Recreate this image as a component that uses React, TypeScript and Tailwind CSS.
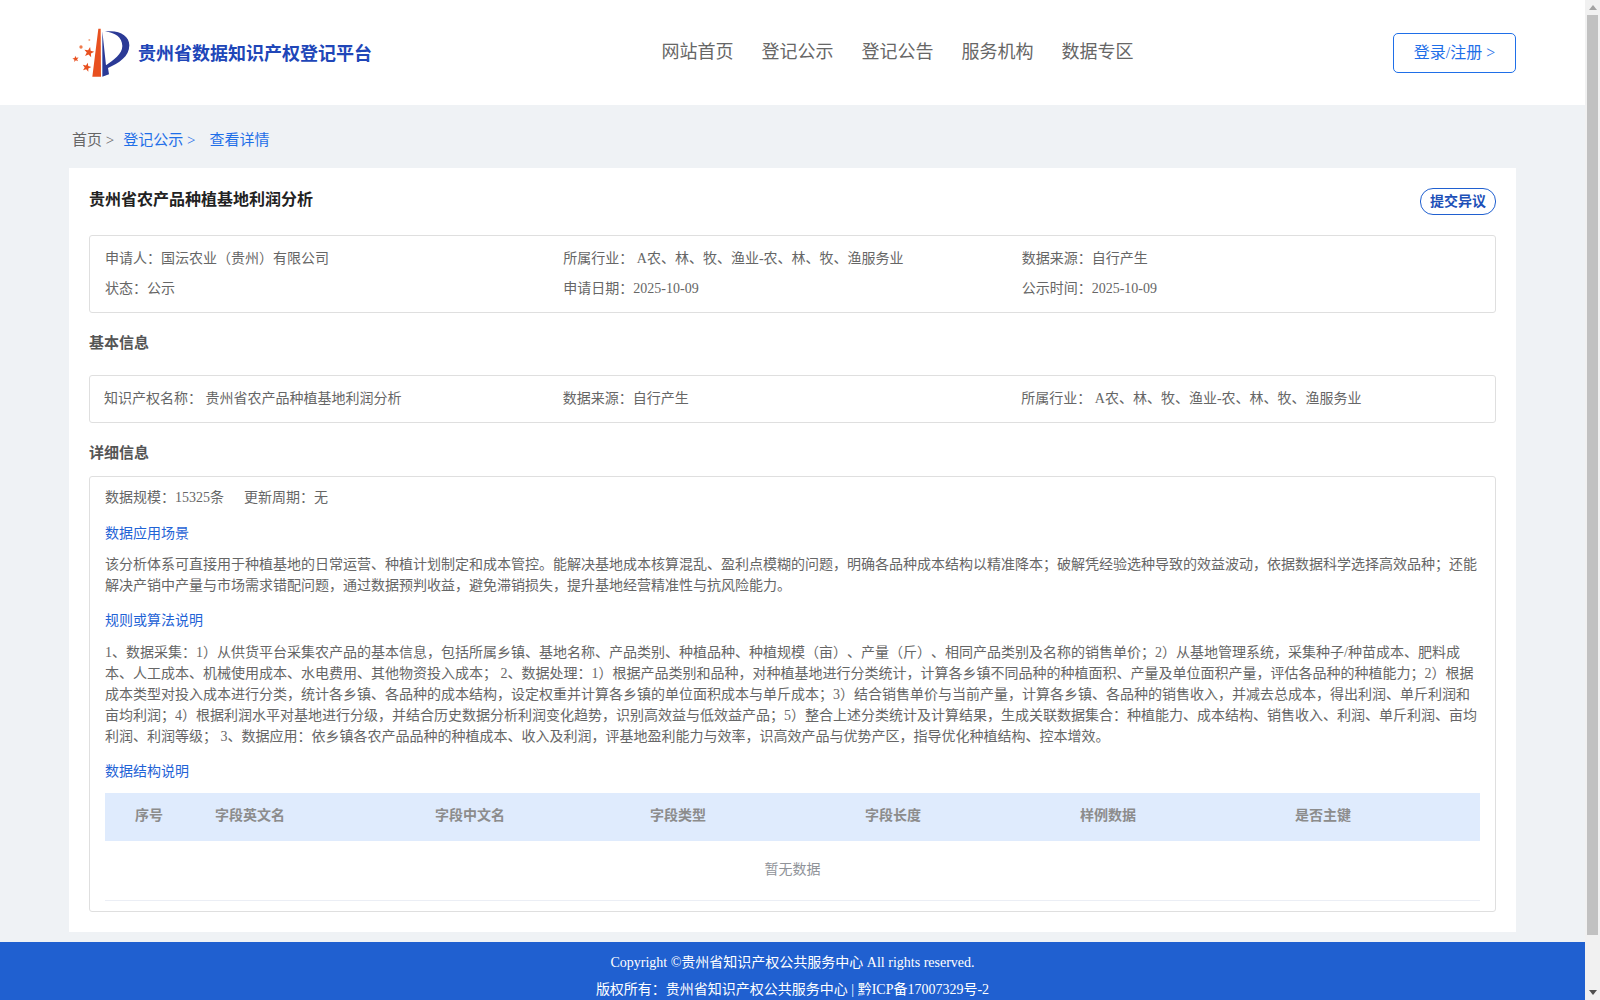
const CJK = "font-['Liberation_Serif','Noto_Sans_CJK_SC',serif]";

// Converts to the full-width punctuation used by the page's Chinese copy.
function fw(s: string) {
  return s
    .replace(/:/g, "\uFF1A")
    .replace(/,/g, "\uFF0C")
    .replace(/;/g, "\uFF1B")
    .replace(/\(/g, "\uFF08")
    .replace(/\)/g, "\uFF09");
}

function star(cx: number, cy: number, r: number, rot: number) {
  const pts: string[] = [];
  for (let i = 0; i < 10; i++) {
    const rad = i % 2 === 0 ? r : r * 0.42;
    const a = ((rot + i * 36 - 90) * Math.PI) / 180;
    pts.push(`${(cx + rad * Math.cos(a)).toFixed(1)},${(cy + rad * Math.sin(a)).toFixed(1)}`);
  }
  return pts.join(" ");
}

function Logo() {
  return (
    <svg width="60" height="50" viewBox="36 26 180 150" className="shrink-0">
      <path d="M115 28 L122 28 L123 172 L97 172 Z" fill="#e8501f" />
      <path
        d="M127 36 L127 172 L147 165 L144 146 C176 132 208 112 208 78 C208 48 176 30 135 37 C165 38 187 54 187 80 C187 104 160 122 138 138 Z"
        fill="#2b3a96"
      />
      <polygon points={star(87, 99, 16, 12)} fill="#e8501f" />
      <polygon points={star(47, 119, 10, -10)} fill="#e8501f" />
      <polygon points={star(80, 144, 14, 15)} fill="#e8501f" />
      <circle cx="63" cy="83" r="5" fill="#ee7a4c" />
      <circle cx="88" cy="62" r="3" fill="#f2a888" />
    </svg>
  );
}

function Row({ children, className = "" }: { children: React.ReactNode; className?: string }) {
  return <div className={"grid grid-cols-3 " + className}>{children}</div>;
}

function Scrollbar() {
  return (
    <div className="w-[15px] h-full shrink-0 bg-[#f1f1f1] flex flex-col items-center">
      <div className="h-[15px] flex items-center justify-center shrink-0">
        <svg width="8" height="5" viewBox="0 0 8 5">
          <path d="M4 0 L8 5 L0 5 Z" fill="#a3a3a3" />
        </svg>
      </div>
      <div className="w-[11px] h-[920px] bg-[#c1c1c1] shrink-0" />
      <div className="flex-1 flex items-end justify-center pb-[5px]">
        <svg width="8" height="5" viewBox="0 0 8 5">
          <path d="M0 0 L8 0 L4 5 Z" fill="#505050" />
        </svg>
      </div>
    </div>
  );
}

const scenario =
  "该分析体系可直接用于种植基地的日常运营、种植计划制定和成本管控。能解决基地成本核算混乱、盈利点模糊的问题,明确各品种成本结构以精准降本;破解凭经验选种导致的效益波动,依据数据科学选择高效品种;还能解决产销中产量与市场需求错配问题,通过数据预判收益,避免滞销损失,提升基地经营精准性与抗风险能力。";
const rules =
  "1、数据采集:1)从供货平台采集农产品的基本信息,包括所属乡镇、基地名称、产品类别、种植品种、种植规模(亩)、产量(斤)、相同产品类别及名称的销售单价;2)从基地管理系统,采集种子/种苗成本、肥料成本、人工成本、机械使用成本、水电费用、其他物资投入成本; 2、数据处理:1)根据产品类别和品种,对种植基地进行分类统计,计算各乡镇不同品种的种植面积、产量及单位面积产量,评估各品种的种植能力;2)根据成本类型对投入成本进行分类,统计各乡镇、各品种的成本结构,设定权重并计算各乡镇的单位面积成本与单斤成本;3)结合销售单价与当前产量,计算各乡镇、各品种的销售收入,并减去总成本,得出利润、单斤利润和亩均利润;4)根据利润水平对基地进行分级,并结合历史数据分析利润变化趋势,识别高效益与低效益产品;5)整合上述分类统计及计算结果,生成关联数据集合:种植能力、成本结构、销售收入、利润、单斤利润、亩均利润、利润等级; 3、数据应用:依乡镇各农产品品种的种植成本、收入及利润,评基地盈利能力与效率,识高效产品与优势产区,指导优化种植结构、控本增效。";

export default function App() {
  const heads = ["序号", "字段英文名", "字段中文名", "字段类型", "字段长度", "样例数据", "是否主键"];
  return (
    <div className={"flex w-full h-screen overflow-hidden bg-[#eff2f5] text-[14px] text-[#666666] [text-spacing-trim:space-all] " + CJK}>
      <div className="flex-1 min-w-0 h-full overflow-hidden">
        <header className="h-[105px] bg-white flex items-center pl-[72px]">
          <div className="flex items-center w-[589.5px]">
            <Logo />
            <span className="ml-[6px] mt-[4px] text-[18px] font-bold text-[#2046b8]">贵州省数据知识产权登记平台</span>
          </div>
          <nav className="flex gap-[28px] text-[18px] text-[#666666] -mt-[1px]">
            <span>网站首页</span>
            <span>登记公示</span>
            <span>登记公告</span>
            <span>服务机构</span>
            <span>数据专区</span>
          </nav>
          <div className="ml-auto mr-[69px] w-[123px] h-[40px] border border-[#1f6fe8] rounded-[5px] flex items-center justify-center text-[16px] text-[#1f6fe8]">
            登录/注册 &gt;
          </div>
        </header>

        <div className="h-[63px] pl-[72px] flex items-center text-[15px] pt-[8px]">
          <span>首页 &gt;</span>
          <span className="ml-[9px] text-[#1f6fe8]">登记公示 &gt;</span>
          <span className="ml-[14px] text-[#1f6fe8]">查看详情</span>
        </div>

        <main className="ml-[69px] w-[1447px] bg-white px-[20px] pt-[20px] pb-[20px]">
          <div className="flex justify-between items-start h-[47px]">
            <h1 className="mt-[1px] text-[16px] font-bold text-[#222222] leading-[22px]">贵州省农产品种植基地利润分析</h1>
            <div className="w-[76px] h-[27px] border border-[#2060d0] rounded-[13px] flex items-center justify-center text-[14px] font-bold text-[#1d50b8]">提交异议</div>
          </div>

          <div className="border border-[#dfdfdf] rounded-[3px] px-[15px] pt-[8px] h-[78px] leading-[30px]">
            <Row>
              <div>{fw("申请人:国沄农业(贵州)有限公司")}</div>
              <div>{fw("所属行业: A农、林、牧、渔业-农、林、牧、渔服务业")}</div>
              <div>{fw("数据来源:自行产生")}</div>
            </Row>
            <Row>
              <div>{fw("状态:公示")}</div>
              <div>{fw("申请日期:2025-10-09")}</div>
              <div>{fw("公示时间:2025-10-09")}</div>
            </Row>
          </div>

          <h2 className="mt-[19px] mb-[21px] text-[15px] font-bold text-[#555555] leading-[22px]">基本信息</h2>

          <div className="border border-[#dfdfdf] rounded-[3px] pl-[14px] pr-[15px] pb-[2px] h-[48px] flex items-center">
            <Row className="w-full">
              <div>{fw("知识产权名称: 贵州省农产品种植基地利润分析")}</div>
              <div>{fw("数据来源:自行产生")}</div>
              <div>{fw("所属行业: A农、林、牧、渔业-农、林、牧、渔服务业")}</div>
            </Row>
          </div>

          <h2 className="mt-[19px] mb-[12px] text-[15px] font-bold text-[#555555] leading-[22px]">详细信息</h2>

          <div className="border border-[#dfdfdf] rounded-[3px] px-[15px] pt-[10px] pb-[10px]">
            <div className="leading-[22px]">{fw("数据规模:15325条")}<span className="ml-[20px]">{fw("更新周期:无")}</span></div>
            <div className="mt-[14px] text-[#1f63d6] leading-[22px]">数据应用场景</div>
            <p className="mt-[9px] leading-[21px]">{fw(scenario)}</p>
            <div className="mt-[14px] text-[#1f63d6] leading-[22px]">规则或算法说明</div>
            <p className="mt-[10px] leading-[21px]">{fw(rules)}</p>
            <div className="mt-[14px] text-[#1f63d6] leading-[22px]">数据结构说明</div>
            <div className="mt-[10px] h-[48px] pb-[3px] bg-[#dfebfd] grid grid-cols-[110px_220px_215px_215px_215px_215px_1fr] items-center font-bold text-[#8c8c8c]">
              {heads.map((h, i) => (
                <div key={h} className={i === 0 ? "pl-[30px]" : ""}>{h}</div>
              ))}
            </div>
            <div className="h-[60px] pb-[2px] border-b border-[#ebeef5] flex items-center justify-center text-[#909399]">暂无数据</div>
          </div>
        </main>

        <footer className="mt-[10px] h-[110px] bg-[#2060d0] text-center text-white leading-[27px] pt-[7px]">
          <div>Copyright ©贵州省知识产权公共服务中心 All rights reserved.</div>
          <div>{fw("版权所有:贵州省知识产权公共服务中心 | 黔ICP备17007329号-2")}</div>
        </footer>
      </div>
      <Scrollbar />
    </div>
  );
}
